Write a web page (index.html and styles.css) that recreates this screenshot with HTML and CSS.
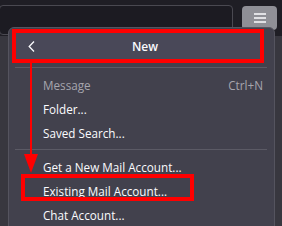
FILE: index.html
```html
<!DOCTYPE html>
<html lang="en">
<head>
    <meta charset="UTF-8">
    <title>New menu</title>
    <link rel="stylesheet" href="styles.css">
</head>
<body>
    <div class="toolbar">
        <div class="search"></div>
        <div class="menu-button">
            <svg width="12" height="10" viewBox="0 0 12 10">
                <path d="M0 1h12M0 5h12M0 9h12" stroke="#fbfbfe" stroke-width="1.3"/>
            </svg>
        </div>
    </div>

    <div class="panel">
        <div class="panel-header">
            <svg class="back" width="7" height="11" viewBox="0 0 7 11">
                <path d="M6 0.5L1.2 5.5L6 10.5" fill="none" stroke="#fbfbfe" stroke-width="1.3"/>
            </svg>
            <span class="title">New</span>
        </div>
        <div class="separator"></div>
        <div class="item disabled"><span>Message</span><span class="shortcut">Ctrl+N</span></div>
        <div class="item">Folder...</div>
        <div class="item">Saved Search...</div>
        <div class="separator"></div>
        <div class="item">Get a New Mail Account...</div>
        <div class="item">Existing Mail Account...</div>
        <div class="item">Chat Account...</div>
    </div>

    <!-- red annotations drawn over the screenshot -->
    <div class="mark mark-header"></div>
    <div class="mark mark-existing"></div>
    <div class="arrow-line"></div>
    <svg class="arrow-head" width="14" height="19" viewBox="0 0 14 19">
        <path d="M0 0H14L7 19Z" fill="#ff0000"/>
    </svg>
</body>
</html>
```

FILE: styles.css
```css
body {
    margin: 0;
    width: 282px;
    height: 226px;
    overflow: hidden;
    background-color: #38373f;
    font-family: "Open Sans", "Noto Sans", sans-serif;
    font-size: 11.7px;
    color: #fbfbfe;
    position: relative;
}
.toolbar {
    display: flex;
    align-items: flex-start;
    gap: 9px;
    height: 36px;
    padding-top: 5px;
    box-sizing: border-box;
    background-color: #1f1e25;
}
.search {
    width: 234px;
    height: 30px;
    margin-left: -1px;
    border: 1px solid #4a4951;
    border-radius: 4px;
    background-color: #1c1b22;
    box-sizing: border-box;
}
.menu-button {
    width: 35px;
    height: 24px;
    margin-top: 1px;
    border-radius: 4px;
    background-color: #8f8f96;
    display: flex;
    align-items: center;
    justify-content: center;
}
.panel {
    position: absolute;
    left: 8px;
    top: 27px;
    width: 267px;
    height: 210px;
    box-sizing: border-box;
    padding-top: 2px;
    background-color: #42414d;
    border: 1px solid #55545f;
    border-radius: 6px;
}
.panel-header {
    margin: 0 10px 0 3px;
    padding-left: 14px;
    height: 33px;
    background-color: #494858;
    display: flex;
    align-items: center;
    justify-content: center;
    position: relative;
}
.back {
    position: absolute;
    left: 16px;
    top: 11px;
}
.title {
    font-weight: 600;
    font-size: 12px;
}
.separator {
    height: 1px;
    margin: 4px 7px 5px 6px;
    background-color: #5b5a65;
}
.item {
    height: 24px;
    line-height: 24px;
    padding: 0 11px 0 34px;
    display: flex;
    justify-content: space-between;
}
.item.disabled {
    color: #a6a5ad;
}
.mark {
    position: absolute;
    border: 4px solid #ff0000;
    box-sizing: border-box;
}
.mark-header {
    left: 12px;
    top: 29px;
    width: 252px;
    height: 34px;
}
.mark-existing {
    left: 21px;
    top: 174px;
    width: 173px;
    height: 27px;
}
.arrow-line {
    position: absolute;
    left: 30px;
    top: 62px;
    width: 2px;
    height: 94px;
    background-color: #ff0000;
}
.arrow-head {
    position: absolute;
    left: 24px;
    top: 154px;
}
```
